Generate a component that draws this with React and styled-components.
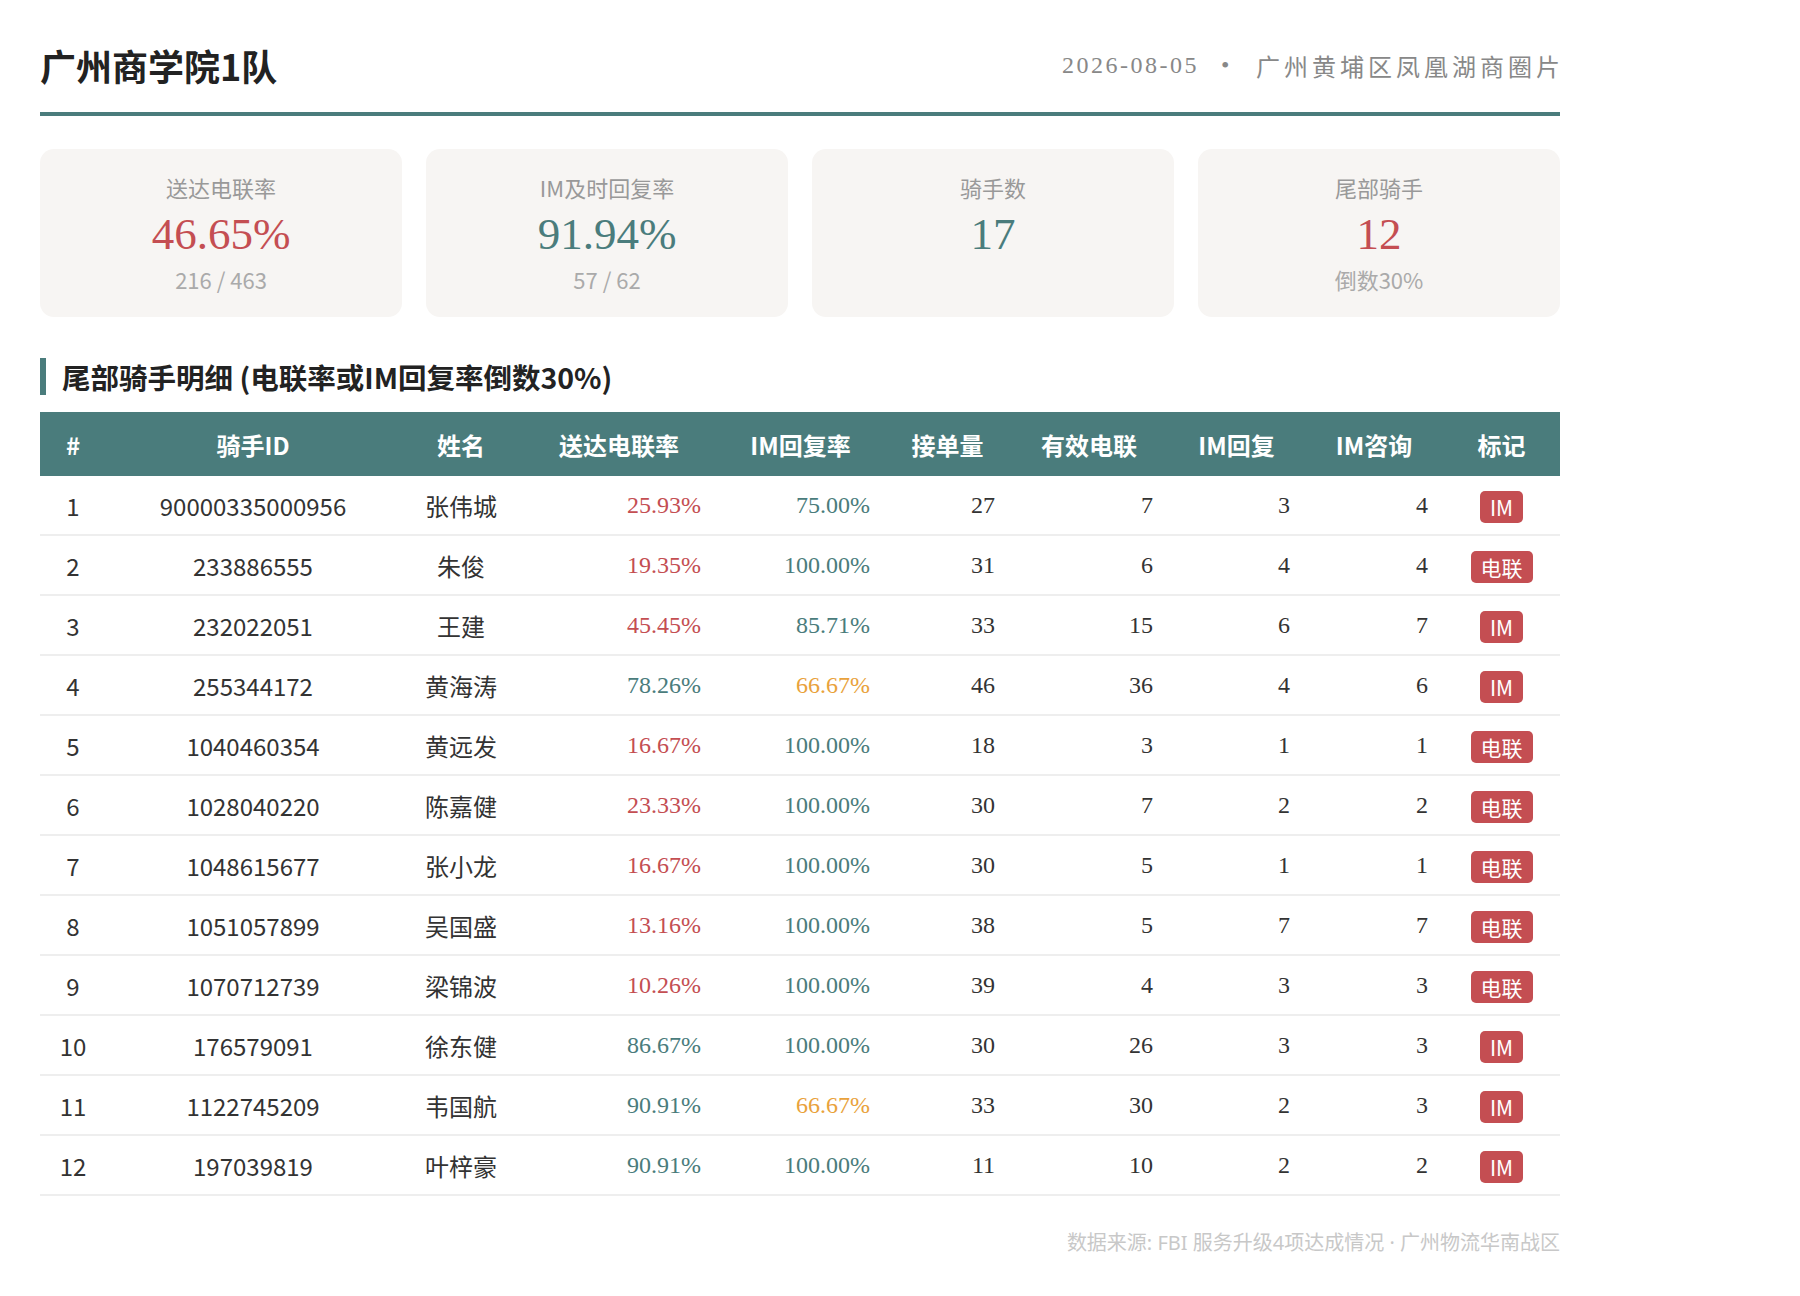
import React from 'react';
import styled, { createGlobalStyle } from 'styled-components';

const TEAL = '#4a7c7c';
const RED = '#c44e52';
const ORANGE = '#e9a23b';

const GlobalStyle = createGlobalStyle`
  body {
    margin: 0;
    background: #fff;
    font-family: "Noto Sans CJK SC", "Noto Sans", sans-serif;
    color: #333;
  }
`;

const Page = styled.div`
  width: 1600px;
  box-sizing: border-box;
  padding: 40px 40px 30px;
`;

const Header = styled.header`
  display: flex;
  justify-content: space-between;
  align-items: center;
  padding-bottom: 22px;
  border-bottom: 4px solid ${TEAL};
`;

const Title = styled.h1`
  margin: 0;
  font-size: 36px;
  line-height: 50px;
  font-weight: 700;
  color: #222;
`;

const Meta = styled.div`
  display: flex;
  align-items: center;
  font-family: "Liberation Serif", "Noto Sans CJK SC", serif;
  font-size: 24px;
  letter-spacing: 2.5px;
  color: #888;
`;

const Dot = styled.span`
  margin: 0 24px 0 22px;
`;

const Place = styled.span`
  letter-spacing: 4px;
  margin-right: -4px;
`;

const Cards = styled.div`
  display: grid;
  grid-template-columns: repeat(4, 1fr);
  gap: 24px;
  margin-top: 33px;
`;

const Card = styled.div`
  background: #f7f5f3;
  border-radius: 14px;
  padding: 22px 20px 20px;
  height: 168px;
  box-sizing: border-box;
  text-align: center;
`;

const CardLabel = styled.div`
  font-size: 22px;
  line-height: 33px;
  color: #999;
`;

const CardValue = styled.div`
  margin-top: 4px;
  font-family: "Liberation Serif", serif;
  font-size: 45px;
  line-height: 53px;
  color: ${(p) => p.color};
`;

const CardSub = styled.div`
  margin-top: 2px;
  font-size: 22px;
  line-height: 33px;
  color: #aaa;
`;

const SectionTitle = styled.h2`
  margin: 41px 0 17px;
  padding-left: 16px;
  border-left: 6px solid ${TEAL};
  font-size: 28.5px;
  line-height: 37px;
  font-weight: 700;
  color: #222;
`;

const Table = styled.table`
  width: 100%;
  border-collapse: collapse;
  table-layout: fixed;
`;

const Th = styled.th`
  width: ${(p) => p.w}px;
  height: 64px;
  padding: 0;
  background: ${TEAL};
  color: #fff;
  font-size: 24px;
  font-weight: 700;
  text-align: center;
`;

const Tr = styled.tr`
  border-bottom: 2px solid #eeeeee;
`;

const Td = styled.td`
  height: 58px;
  padding: 0 ${(p) => (p.num ? 15 : 0)}px 0 0;
  text-align: ${(p) => (p.num ? 'right' : 'center')};
  font-size: 24px;
  color: #333;
`;

const NumTd = styled(Td)`
  font-family: "Liberation Serif", serif;
  color: ${(p) => p.color || '#333'};
`;

const Badge = styled.span`
  display: inline-block;
  height: 32px;
  line-height: 32px;
  padding: 0 10px;
  border-radius: 5px;
  background: ${RED};
  color: #fff;
  font-size: 21px;
`;

const Footer = styled.div`
  margin-top: 32px;
  text-align: right;
  font-family: "Noto Sans", "Noto Sans CJK SC", sans-serif;
  font-size: 20px;
  line-height: 30px;
  color: #c8c8c8;
`;

const columns = [
  ['#', 66],
  ['骑手ID', 294],
  ['姓名', 122],
  ['送达电联率', 194],
  ['IM回复率', 169],
  ['接单量', 125],
  ['有效电联', 158],
  ['IM回复', 137],
  ['IM咨询', 138],
  ['标记', 117],
];

const riders = [
  ['90000335000956', '张伟城', 25.93, 75.0, 27, 7, 3, 4, 'IM'],
  ['233886555', '朱俊', 19.35, 100.0, 31, 6, 4, 4, '电联'],
  ['232022051', '王建', 45.45, 85.71, 33, 15, 6, 7, 'IM'],
  ['255344172', '黄海涛', 78.26, 66.67, 46, 36, 4, 6, 'IM'],
  ['1040460354', '黄远发', 16.67, 100.0, 18, 3, 1, 1, '电联'],
  ['1028040220', '陈嘉健', 23.33, 100.0, 30, 7, 2, 2, '电联'],
  ['1048615677', '张小龙', 16.67, 100.0, 30, 5, 1, 1, '电联'],
  ['1051057899', '吴国盛', 13.16, 100.0, 38, 5, 7, 7, '电联'],
  ['1070712739', '梁锦波', 10.26, 100.0, 39, 4, 3, 3, '电联'],
  ['176579091', '徐东健', 86.67, 100.0, 30, 26, 3, 3, 'IM'],
  ['1122745209', '韦国航', 90.91, 66.67, 33, 30, 2, 3, 'IM'],
  ['197039819', '叶梓豪', 90.91, 100.0, 11, 10, 2, 2, 'IM'],
];

// under 60 is red, under 70 is orange, the rest teal
function rateColor(v) {
  if (v < 60) return RED;
  if (v < 70) return ORANGE;
  return TEAL;
}

const stats = [
  { label: '送达电联率', value: '46.65%', sub: '216 / 463', color: RED },
  { label: 'IM及时回复率', value: '91.94%', sub: '57 / 62', color: TEAL },
  { label: '骑手数', value: '17', color: TEAL },
  { label: '尾部骑手', value: '12', sub: '倒数30%', color: RED },
];

export default function App() {
  return (
    <Page>
      <GlobalStyle />
      <Header>
        <Title>广州商学院1队</Title>
        <Meta>
          <span>2026-08-05</span>
          <Dot>•</Dot>
          <Place>广州黄埔区凤凰湖商圈片</Place>
        </Meta>
      </Header>

      <Cards>
        {stats.map((s) => (
          <Card key={s.label}>
            <CardLabel>{s.label}</CardLabel>
            <CardValue color={s.color}>{s.value}</CardValue>
            {s.sub && <CardSub>{s.sub}</CardSub>}
          </Card>
        ))}
      </Cards>

      <SectionTitle>尾部骑手明细 (电联率或IM回复率倒数30%)</SectionTitle>

      <Table>
        <thead>
          <tr>
            {columns.map(([name, w]) => (
              <Th key={name} w={w}>{name}</Th>
            ))}
          </tr>
        </thead>
        <tbody>
          {riders.map((r, i) => (
            <Tr key={r[0]}>
              <Td>{i + 1}</Td>
              <Td>{r[0]}</Td>
              <Td>{r[1]}</Td>
              <NumTd num color={rateColor(r[2])}>{r[2].toFixed(2)}%</NumTd>
              <NumTd num color={rateColor(r[3])}>{r[3].toFixed(2)}%</NumTd>
              <NumTd num>{r[4]}</NumTd>
              <NumTd num>{r[5]}</NumTd>
              <NumTd num>{r[6]}</NumTd>
              <NumTd num>{r[7]}</NumTd>
              <Td><Badge>{r[8]}</Badge></Td>
            </Tr>
          ))}
        </tbody>
      </Table>

      <Footer>数据来源: FBI 服务升级4项达成情况 · 广州物流华南战区</Footer>
    </Page>
  );
}
